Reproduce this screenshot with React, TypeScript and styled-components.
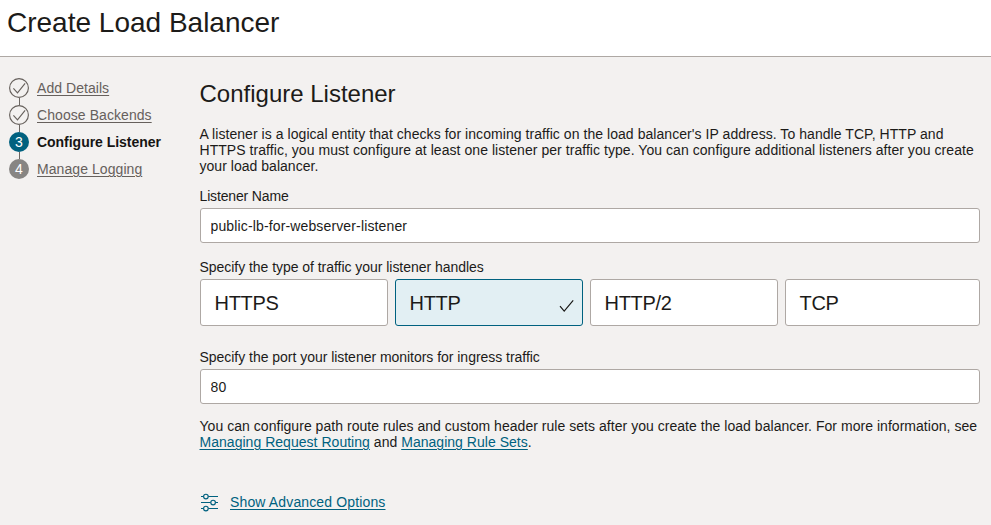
import React from "react";
import styled, { createGlobalStyle } from "styled-components";

const GlobalStyle = createGlobalStyle`
  *, *::before, *::after { box-sizing: border-box; }
  body {
    margin: 0;
    overflow: hidden;
    background: #f3f1f0;
    color: #1c1b19;
    font-family: "Liberation Sans", Arial, sans-serif;
    font-size: 14px;
    line-height: 16px;
  }
`;

const Page = styled.div`
  display: flex;
  flex-direction: column;
  height: 525px;
`;

const Header = styled.header`
  height: 57px;
  padding: 7px 7px 0;
  background: #fff;
  border-bottom: 1px solid #aea8a4;
`;

const Title = styled.h1`
  margin: 0;
  font-size: 28px;
  font-weight: 400;
  line-height: 32px;
`;

const Body = styled.div`
  display: flex;
  flex: 1;
`;

const Steps = styled.ol`
  list-style: none;
  width: 200px;
  margin: 0;
  padding: 21px 0 0 9px;
`;

const Step = styled.li`
  display: flex;
  align-items: flex-start;
  gap: 8px;
  height: 27px;
`;

const Marker = styled.div`
  display: flex;
  flex-direction: column;
  align-items: center;
  width: 20px;
  height: 27px;
`;

const Connector = styled.span`
  width: 1px;
  flex: 1;
  background: #6b6662;
`;

const Badge = styled.span<{ $active?: boolean }>`
  width: 20px;
  height: 20px;
  border-radius: 50%;
  background: ${(p) => (p.$active ? "#00617f" : "#878583")};
  color: #fff;
  text-align: center;
  line-height: 20px;
`;

const StepLink = styled.a<{ $active?: boolean; $tracking?: number }>`
  line-height: 20px;
  letter-spacing: ${(p) => p.$tracking ?? 0}px;
  font-weight: ${(p) => (p.$active ? 700 : 400)};
  color: ${(p) => (p.$active ? "#161513" : "#66605c")};
  text-decoration: ${(p) => (p.$active ? "none" : "underline")};
  text-underline-offset: 2px;
  text-decoration-thickness: 1px;
`;

const Main = styled.main`
  width: 780px;
  padding-top: 22px;
`;

const Heading = styled.h2`
  margin: 0 0 17px -0.5px;
  font-size: 24px;
  font-weight: 400;
  line-height: 30px;
`;

const Paragraph = styled.p`
  margin: 0 0 0 -0.5px;
  white-space: nowrap;
`;

const Line = styled.span<{ $tracking?: number }>`
  display: block;
  letter-spacing: ${(p) => p.$tracking ?? 0}px;
`;

const Label = styled.label<{ $gap: number; $tracking?: number }>`
  display: block;
  margin: ${(p) => p.$gap}px 0 4px -0.5px;
  letter-spacing: ${(p) => p.$tracking ?? 0}px;
`;

const Input = styled.input`
  display: block;
  width: 780px;
  height: 35px;
  padding: 1px 9.5px 0;
  border: 1px solid #aea8a4;
  border-radius: 3px;
  background: #fff;
  color: #1c1b19;
  font: 14px "Liberation Sans", Arial, sans-serif;
  letter-spacing: 0.14px;
  outline: none;
`;

const Options = styled.div`
  display: grid;
  grid-template-columns: 188px 188px 188px 195px;
  gap: 7px;
`;

const Option = styled.button<{ $selected?: boolean }>`
  display: flex;
  align-items: center;
  justify-content: space-between;
  height: 47px;
  padding: 2px 7px 0 13.5px;
  border: 1px solid ${(p) => (p.$selected ? "#00617f" : "#aea8a4")};
  border-radius: 3px;
  background: ${(p) => (p.$selected ? "#e2eff3" : "#fff")};
  color: #1c1b19;
  font: 20px "Liberation Sans", Arial, sans-serif;
  letter-spacing: -0.3px;

  svg { margin-top: 5px; }
`;

const Note = styled(Paragraph)`
  margin-top: 14px;
`;

const Link = styled.a`
  color: #00617f;
  text-decoration: underline;
  text-underline-offset: 2px;
  text-decoration-thickness: 1px;
`;

const Advanced = styled.div`
  display: flex;
  align-items: center;
  gap: 11px;
  margin-top: 42px;
  height: 20px;
  letter-spacing: 0.14px;
`;

const DoneIcon = () => (
  <svg width="20" height="20" viewBox="0 0 20 20" fill="none" stroke="#66605c" strokeWidth="1.15">
    <circle cx="10" cy="10" r="9.4" />
    <path d="M4.4 10.4 8.5 14.8 16.1 5.4" />
  </svg>
);

const CheckIcon = () => (
  <svg width="16" height="14" viewBox="0 0 16 14" fill="none" stroke="#161513" strokeWidth="1.15">
    <path d="M1 7.1 5.2 12 14.2 1.3" />
  </svg>
);

const SlidersIcon = () => (
  <svg width="19" height="20" viewBox="0 0 19 20" fill="none" stroke="#00617f" strokeWidth="1.15">
    <path d="M1 4.5h2.5M8.3 4.5H18M1 10.5h9.7M15.5 10.5H18M1 16.5h2.5M8.3 16.5H18" />
    <circle cx="5.9" cy="4.5" r="2.3" />
    <circle cx="13.1" cy="10.5" r="2.3" />
    <circle cx="5.9" cy="16.5" r="2.3" />
  </svg>
);

const steps = [
  { label: "Add Details", done: true, tracking: 0.05 },
  { label: "Choose Backends", done: true, tracking: 0.07 },
  { label: "Configure Listener", active: true, tracking: -0.03 },
  { label: "Manage Logging", tracking: 0.07 },
];

export default function App() {
  return (
    <Page>
      <GlobalStyle />
      <Header>
        <Title>Create Load Balancer</Title>
      </Header>
      <Body>
        <Steps>
          {steps.map((s, i) => (
            <Step key={s.label}>
              <Marker>
                {s.done ? <DoneIcon /> : <Badge $active={s.active}>{i + 1}</Badge>}
                {i < steps.length - 1 && <Connector />}
              </Marker>
              <StepLink $active={s.active} $tracking={s.tracking}>{s.label}</StepLink>
            </Step>
          ))}
        </Steps>
        <Main>
          <Heading>Configure Listener</Heading>
          <Paragraph>
            <Line $tracking={0.055}>A listener is a logical entity that checks for incoming traffic on the load balancer's IP address. To handle TCP, HTTP and</Line>
            <Line $tracking={0.052}>HTTPS traffic, you must configure at least one listener per traffic type. You can configure additional listeners after you create</Line>
            <Line $tracking={0.03}>your load balancer.</Line>
          </Paragraph>
          <Label $gap={14} $tracking={-0.15} htmlFor="name">Listener Name</Label>
          <Input id="name" defaultValue="public-lb-for-webserver-listener" />
          <Label $gap={16} $tracking={-0.04}>Specify the type of traffic your listener handles</Label>
          <Options>
            <Option>HTTPS</Option>
            <Option $selected>HTTP<CheckIcon /></Option>
            <Option>HTTP/2</Option>
            <Option>TCP</Option>
          </Options>
          <Label $gap={23} $tracking={-0.03} htmlFor="port">Specify the port your listener monitors for ingress traffic</Label>
          <Input id="port" defaultValue="80" />
          <Note>
            <Line $tracking={0.037}>You can configure path route rules and custom header rule sets after you create the load balancer. For more information, see</Line>
            <Line $tracking={0.03}><Link>Managing Request Routing</Link> and <Link>Managing Rule Sets</Link>.</Line>
          </Note>
          <Advanced>
            <SlidersIcon />
            <Link>Show Advanced Options</Link>
          </Advanced>
        </Main>
      </Body>
    </Page>
  );
}
